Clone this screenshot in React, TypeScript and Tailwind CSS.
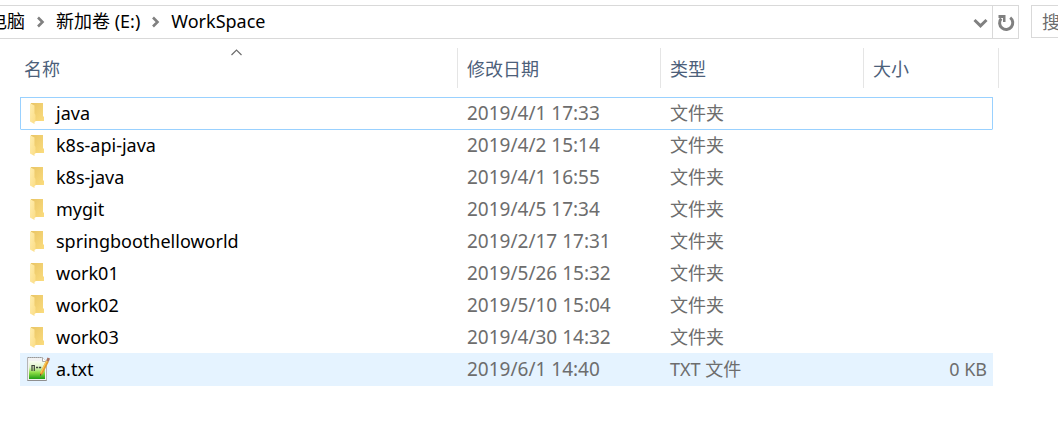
import React from "react";

type Entry = {
  name: string;
  modified: string;
  kind: string;
  size?: string;
  state?: "focused" | "hovered";
};

const entries: Entry[] = [
  { name: "java", modified: "2019/4/1 17:33", kind: "文件夹", state: "focused" },
  { name: "k8s-api-java", modified: "2019/4/2 15:14", kind: "文件夹" },
  { name: "k8s-java", modified: "2019/4/1 16:55", kind: "文件夹" },
  { name: "mygit", modified: "2019/4/5 17:34", kind: "文件夹" },
  { name: "springboothelloworld", modified: "2019/2/17 17:31", kind: "文件夹" },
  { name: "work01", modified: "2019/5/26 15:32", kind: "文件夹" },
  { name: "work02", modified: "2019/5/10 15:04", kind: "文件夹" },
  { name: "work03", modified: "2019/4/30 14:32", kind: "文件夹" },
  { name: "a.txt", modified: "2019/6/1 14:40", kind: "TXT 文件", size: "0 KB", state: "hovered" },
];

function FolderIcon() {
  return (
    <svg width="24" height="24" viewBox="0 0 24 24" className="shrink-0" aria-hidden="true">
      <defs>
        <linearGradient id="folder-back" x1="0" y1="0" x2="1" y2="1">
          <stop offset="0" stopColor="#e9c565" />
          <stop offset="1" stopColor="#fbdc7e" />
        </linearGradient>
        <linearGradient id="folder-front" x1="0" y1="0" x2="1" y2="1">
          <stop offset="0" stopColor="#ffeeb0" />
          <stop offset="1" stopColor="#fbdc84" />
        </linearGradient>
      </defs>
      <path d="M4 2h12v13l1 1v4H5z" fill="url(#folder-back)" />
      <path d="M3 2.200 7.500 4.500v8L8.500 14v6.500l-1 .5v2L3 20.500z" fill="url(#folder-front)" />
    </svg>
  );
}

function TextFileIcon() {
  return (
    <svg width="24" height="26" viewBox="0 0 24 26" className="shrink-0" aria-hidden="true">
      <defs>
        <linearGradient id="page-fill" x1="0" y1="0" x2="0" y2="1">
          <stop offset="0" stopColor="#f8fcf3" />
          <stop offset="0.35" stopColor="#dff5c9" />
          <stop offset="0.65" stopColor="#8bdc45" />
          <stop offset="1" stopColor="#1f9d14" />
        </linearGradient>
      </defs>
      <path d="M.5 1.500h15l4 4v19H.5z" fill="#f2f2f2" stroke="#b5b5b5" />
      <path d="M2 5h16v18H2z" fill="url(#page-fill)" />
      <path d="M1 1.500h14" stroke="#999" strokeDasharray="1 1" />
      <path d="M15.500 1.500v4h4" fill="#fff" stroke="#aaa" />
      <path d="M.5 24.500h19" stroke="#8f8f8f" />
      <path d="M5 15V9M5 9.500h2M7.300 9v6" fill="none" stroke="#3b4238" strokeWidth="1.200" />
      <path d="M9 11.500h2.200M12 11.500h2.200" stroke="#3b4238" strokeWidth="1.400" />
      <path d="m19.200 4.500 2.600 1.300-6.200 12.200-2.600 1.900.2-3.500z" fill="#e09a2c" />
      <path d="m19.200 4.500 1.100.5-6 11.900-1.100-.5z" fill="#fbc958" />
      <path d="m19.200 4.500 1.300-3 2.500 1.100-1.200 3.200z" fill="#a8705f" />
      <path d="m13 19.900.1-2 1.400.9z" fill="#404030" />
    </svg>
  );
}

function Crumb({ children }: { children: React.ReactNode }) {
  return (
    <a href="#" className="whitespace-nowrap text-black">
      {children}
    </a>
  );
}

function CrumbArrow() {
  return (
    <span className="flex w-[31px] justify-center pt-[2px]">
      <svg width="10" height="12" viewBox="0 0 10 12" className="shrink-0" aria-hidden="true">
        <path d="m2 1.500 4.500 4.500L2 10.500" fill="none" stroke="#808080" strokeWidth="2.600" />
      </svg>
    </span>
  );
}

function HeaderCell({ label, colSpan }: { label: string; colSpan?: number }) {
  return (
    <th colSpan={colSpan} className="h-10 border-r border-[#e5e5e5] p-0 text-left font-normal">
      <button type="button" className="block w-full pl-[9px] pt-px text-left text-[#4c607a]">
        {label}
      </button>
    </th>
  );
}

function EntryRow({ entry, afterFocused }: { entry: Entry; afterFocused: boolean }) {
  const focused = entry.state === "focused";
  const hovered = entry.state === "hovered";
  const line = focused || afterFocused ? "border-t-[#99d1ff]" : hovered ? "border-t-[#e5f3ff]" : "border-t-transparent";
  const cell = `border-t p-0 pb-[2px] whitespace-nowrap ${line} ${hovered ? "h-[33px] bg-[#e5f3ff]" : "h-8"}`;
  return (
    <tr className="text-[#6d6d6d]">
      <td className={`${cell} border-l ${focused ? "border-l-[#99d1ff]" : hovered ? "border-l-[#e5f3ff]" : "border-l-transparent"}`}>
        <div className="flex items-center pl-[6px] text-black">
          {entry.kind === "文件夹" ? <FolderIcon /> : <TextFileIcon />}
          <span className="pl-[5px]">{entry.name}</span>
        </div>
      </td>
      <td className={`${cell} text-[19px]`}>
        <span className="pl-[9px]">{entry.modified}</span>
      </td>
      <td className={cell}>
        <span className="pl-[9px]">{entry.kind}</span>
      </td>
      <td className={`${cell} border-r text-right ${focused ? "border-r-[#99d1ff]" : hovered ? "border-r-[#e5f3ff]" : "border-r-transparent"}`}>
        <span className="pr-[5px]">{entry.size}</span>
      </td>
      <td className="p-0" />
    </tr>
  );
}

export default function App() {
  return (
    <main className="min-h-screen overflow-hidden bg-white font-['Noto_Sans','Noto_Sans_CJK_SC',sans-serif] text-[18px] leading-6">
      <header className="flex pt-[5px]">
        <div className="flex h-[34px] flex-1 border border-l-0 border-[#d9d9d9]">
          <nav className="-ml-[11px] flex flex-1 items-center pb-[2px]" aria-label="路径">
            <Crumb>电脑</Crumb>
            <CrumbArrow />
            <Crumb>新加卷 (E:)</Crumb>
            <CrumbArrow />
            <Crumb>WorkSpace</Crumb>
          </nav>
          <button type="button" aria-label="展开" className="flex w-6 items-center justify-center pt-[2px]">
            <svg width="16" height="11" viewBox="0 0 16 11" aria-hidden="true">
              <path d="m2.500 2 6 5.800L14.500 2" fill="none" stroke="#808080" strokeWidth="3" />
            </svg>
          </button>
          <button type="button" aria-label="刷新" className="flex w-[26px] items-center justify-center border-l border-[#d9d9d9] pt-[2px]">
            <svg width="18" height="18" viewBox="0 0 18 18" aria-hidden="true">
              <path d="M13.200 3.600A6.600 6.600 0 1 1 4.200 4.500" fill="none" stroke="#808080" strokeWidth="3" />
              <path d="M1.500 1h7v7H6V4H1.500z" fill="#808080" />
            </svg>
          </button>
        </div>
        <div className="ml-3 h-[33px] w-[27px] border border-r-0 border-[#d9d9d9]">
          <input
            type="text"
            aria-label="搜索"
            placeholder="搜"
            className="h-full w-full pl-[10px] outline-none placeholder:text-[#6d6d6d]"
          />
        </div>
      </header>

      <section className="pl-5 pr-[59px] pt-[9px]">
        <table className="w-full table-fixed border-separate border-spacing-0">
          <colgroup>
            <col />
            <col className="w-[203px]" />
            <col className="w-[203px]" />
            <col className="w-[129px]" />
            <col className="w-[6px]" />
          </colgroup>
          <thead>
            <tr>
              <th className="relative h-10 border-r border-[#e5e5e5] p-0 text-left font-normal">
                <svg width="13" height="8" viewBox="0 0 13 8" className="absolute left-1/2 top-0 -ml-[9px]" aria-hidden="true">
                  <path d="m1.500 7 5-5 5 5" fill="none" stroke="#6d6d6d" strokeWidth="1.200" />
                </svg>
                <button type="button" className="block w-full pl-1 pt-px text-left text-[#4c607a]">
                  名称
                </button>
              </th>
              <HeaderCell label="修改日期" />
              <HeaderCell label="类型" />
              <HeaderCell label="大小" colSpan={2} />
            </tr>
          </thead>
          <tbody>
            <tr aria-hidden="true">
              <td colSpan={5} className="h-[9px] p-0" />
            </tr>
            {entries.map((entry, i) => (
              <EntryRow key={entry.name} entry={entry} afterFocused={entries[i - 1]?.state === "focused"} />
            ))}
          </tbody>
        </table>
      </section>
    </main>
  );
}
